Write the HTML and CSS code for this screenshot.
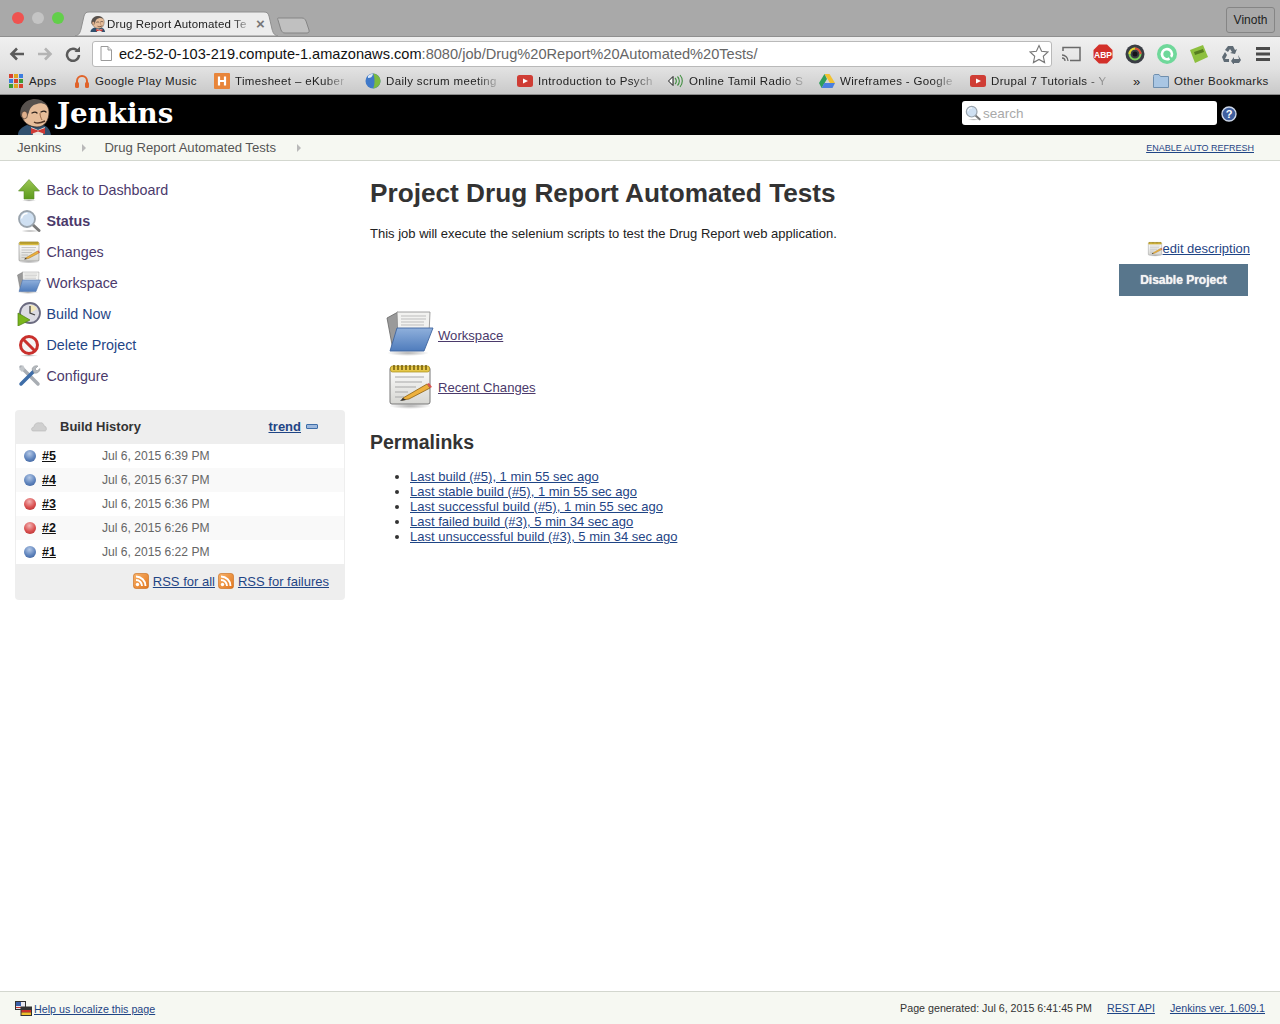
FILE: index.html
```html
<!DOCTYPE html>
<html lang="en">
<head>
<meta charset="utf-8">
<title>Drug Report Automated Tests [Jenkins]</title>
<link rel="stylesheet" href="styles.css">
</head>
<body>
<svg class="defs" width="0" height="0" aria-hidden="true">
  <defs>
    <linearGradient id="gFolder" x1="0" y1="0" x2="0" y2="1"><stop offset="0" stop-color="#8fb0dc"/><stop offset="1" stop-color="#4f7cbc"/></linearGradient>
    <linearGradient id="gPage" x1="0" y1="0" x2="0" y2="1"><stop offset="0" stop-color="#ffffff"/><stop offset="1" stop-color="#d6d6d2"/></linearGradient>
    <linearGradient id="gRss" x1="0" y1="0" x2="1" y2="1"><stop offset="0" stop-color="#f8b26a"/><stop offset="1" stop-color="#e2761d"/></linearGradient>
    <radialGradient id="gShadow"><stop offset="0" stop-color="#000" stop-opacity=".3"/><stop offset="1" stop-color="#000" stop-opacity="0"/></radialGradient>
    <linearGradient id="gArrow" x1="0" y1="0" x2="0" y2="1"><stop offset="0" stop-color="#9cc653"/><stop offset="1" stop-color="#5b9a1c"/></linearGradient>
    <symbol id="i-folder" viewBox="0 0 48 48">
      <ellipse cx="22" cy="43" rx="21" ry="3" fill="url(#gShadow)"/>
      <path d="M1 8 12 2 13 40H7Z" fill="#9a9a9a" stroke="#666" stroke-width=".8"/>
      <path d="M11 2H44L43 24 12 30Z" fill="#f2f2f0" stroke="#8a8a8a" stroke-width=".8"/>
      <path d="M15 6H40M15 9H40M15 12H38M15 15H38" stroke="#bdbdbd" stroke-width="1"/>
      <path d="M11 18H47L38 41H4Z" fill="url(#gFolder)" stroke="#3f659f" stroke-width=".9"/>
    </symbol>
    <symbol id="i-notepad" viewBox="0 0 48 48">
      <ellipse cx="24" cy="44" rx="21" ry="3" fill="url(#gShadow)"/>
      <rect x="4" y="5" width="40" height="37" rx="2" fill="url(#gPage)" stroke="#777"/>
      <rect x="4.500" y="4" width="39" height="6" rx="2" fill="#e6c84a" stroke="#a58a15" stroke-width=".7"/>
      <path d="M8 3v5M12 3v5M16 3v5M20 3v5M24 3v5M28 3v5M32 3v5M36 3v5M40 3v5" stroke="#7a6410" stroke-width="1.600"/>
      <path d="M9 15H38M9 20H36M9 25H30M9 30H22M9 35H18" stroke="#a8a8a8" stroke-width="1.200"/>
      <path d="M17 36 41 22l3 4-21 11-7 1Z" fill="#eeb13d" stroke="#8a5f12" stroke-width=".8"/>
      <path d="M41 22l2-1 3 4-2 1Z" fill="#d9534f"/>
      <path d="M17 36l-3 3 6-1Z" fill="#333"/>
    </symbol>
    <symbol id="i-up" viewBox="0 0 24 24">
      <path d="M12 1.500 22.500 13H17v8H7v-8H1.500Z" fill="url(#gArrow)" stroke="#5c8f2a" stroke-width=".6"/>
      <ellipse cx="12" cy="22.500" rx="7" ry="1.200" fill="url(#gShadow)"/>
    </symbol>
    <symbol id="i-search" viewBox="0 0 24 24">
      <ellipse cx="13" cy="22" rx="9" ry="1.500" fill="url(#gShadow)"/>
      <path d="M15 15 22 21.500" stroke="#7a7a7a" stroke-width="3" stroke-linecap="round"/>
      <circle cx="10" cy="10" r="8" fill="#cfe0f2" stroke="#9aa4ad" stroke-width="1.800"/>
      <path d="M4.500 9.500a5.500 5.500 0 0 1 6-5" fill="none" stroke="#fff" stroke-width="1.500"/>
    </symbol>
    <symbol id="i-play" viewBox="0 0 24 24">
      <circle cx="13" cy="11" r="10" fill="#dcdce4" stroke="#6b6b80" stroke-width="1.800"/>
      <path d="M13 3a8 8 0 0 1 7 4L13 11Z" fill="#f4e9b8"/>
      <path d="M13 4v7l5 2" fill="none" stroke="#444" stroke-width="1.300"/>
      <path d="M1 11 13 18 1 24Z" fill="#7ab51d" stroke="#4c7f0f" stroke-width=".7"/>
    </symbol>
    <symbol id="i-no" viewBox="0 0 24 24">
      <ellipse cx="12" cy="22.500" rx="9" ry="1.300" fill="url(#gShadow)"/>
      <circle cx="12" cy="12" r="8.500" fill="#f4f4f4" stroke="#c9302c" stroke-width="3"/>
      <path d="M6 6 18 18" stroke="#c9302c" stroke-width="3"/>
    </symbol>
    <symbol id="i-tools" viewBox="0 0 24 24">
      <path d="M4 3 21 20" stroke="#a8adb3" stroke-width="3.500" stroke-linecap="round"/>
      <path d="M2 5 6 1l2 4-3 3Z" fill="#c3c7cb"/>
      <path d="M17 7 4 20" stroke="#3f6ea8" stroke-width="3.500" stroke-linecap="round"/>
      <path d="M15 5a4.500 4.500 0 0 1 6-3l-3 3 2 2 3-2.500a4.500 4.500 0 0 1-6 4.500Z" fill="#b4b9be" stroke="#85898d" stroke-width=".5"/>
    </symbol>
    <symbol id="i-rss" viewBox="0 0 16 16">
      <rect x=".5" y=".5" width="15" height="15" rx="2.500" fill="url(#gRss)" stroke="#c76a18" stroke-width=".6"/>
      <circle cx="4.500" cy="11.500" r="1.700" fill="#fff"/>
      <path d="M3 7a6 6 0 0 1 6 6M3 3.500a9.500 9.500 0 0 1 9.500 9.500" fill="none" stroke="#fff" stroke-width="1.900"/>
    </symbol>
    <symbol id="i-jenkins" viewBox="0 0 36 36">
      <path d="M1 36c0-5 4-8 9-10l8 2 8-2c4 1 7 4 8 10Z" fill="#31506e"/>
      <path d="M14 28 21 31 28 28 26 36H16Z" fill="#e9e9e4"/>
      <path d="M14 29 21 31.500 28 29V35L21 32.500 14 35Z" fill="#cf3a35"/>
      <path d="M4 14C4 6 10 1 18 1s14 5 14 12c0 8-4 15-12 15C12 28 5 23 4 14Z" fill="#e6bd9a" stroke="#2f2622" stroke-width=".7"/>
      <path d="M4 18C1 9 8 0 18 0c5 0 9 2 12 6-5-2-8-2-10-1-5 1-7 4-8 8-1 4-4 6-8 5Z" fill="#57514d"/>
      <ellipse cx="7.500" cy="16" rx="3" ry="3.800" fill="#e0b08c" stroke="#2f2622" stroke-width=".6"/>
      <path d="M15 14c2-1 4-1 5 0M24 13c2-1 4-1 5 0" fill="none" stroke="#2b211c" stroke-width="1.300" stroke-linecap="round"/>
      <path d="M23 14c0 3 1 5 2 7" fill="none" stroke="#9a6a4a" stroke-width="1"/>
      <path d="M17 23c3 2 7 1 11-1" fill="none" stroke="#4f3224" stroke-width="1.500"/>
    </symbol>
  </defs>
</svg>

<div class="tabstrip">
  <div class="lights"><span class="light red"></span><span class="light grey"></span><span class="light green"></span></div>
  <div class="tab">
    <svg class="tab-shape" width="203" height="25" viewBox="0 0 203 25"><path d="M0 25c4-1 5-3 6-7L9 5c1-3 2-4 5-4H189c3 0 4 1 5 4l3 13c1 4 2 6 6 7Z" fill="#ececec" stroke="#8f8f8f"/></svg>
    <svg class="tab-fav" width="16" height="16"><use href="#i-jenkins"/></svg>
    <span class="tab-title">Drug Report Automated Te</span>
    <span class="tab-x">×</span>
  </div>
  <svg class="newtab" width="33" height="17" viewBox="0 0 33 17"><path d="M1 1H25c2 0 3 1 4 3l3 9c.5 2-.5 3-2 3H8c-2 0-3-1-4-3L1 3C.5 2 .500 1 1 1Z" fill="#c0c0c0" stroke="#858585"/></svg>
  <span class="user">Vinoth</span>
</div>

<div class="toolbar">
  <svg class="nav" width="16" height="16" viewBox="0 0 16 16"><path d="M15 8H3M8 2.500 2.500 8 8 13.500" fill="none" stroke="#5a5a5a" stroke-width="2.600"/></svg>
  <svg class="nav" width="16" height="16" viewBox="0 0 16 16"><path d="M1 8H13M8 2.500 13.500 8 8 13.500" fill="none" stroke="#b4b4b4" stroke-width="2.600"/></svg>
  <svg class="nav reload" width="16" height="16" viewBox="0 0 16 16"><path d="M13 5.500A6 6 0 1 0 14 9" fill="none" stroke="#5a5a5a" stroke-width="2.500"/><path d="M9.500 6H15V.5Z" fill="#5a5a5a"/></svg>
  <div class="omnibox">
    <svg width="12" height="15" viewBox="0 0 12 15"><path d="M1 .5H8L11.500 4V14.500H1Z" fill="#fff" stroke="#9a9a9a"/><path d="M8 .5V4H11.500" fill="#e8e8e8" stroke="#9a9a9a"/></svg>
    <span class="url">ec2-52-0-103-219.compute-1.amazonaws.com<span class="url-path">:8080/job/Drug%20Report%20Automated%20Tests/</span></span>
    <svg class="star" width="20" height="20" viewBox="0 0 20 20"><path d="M10 1.500 12.600 7.300 19 8 14.300 12.300 15.600 18.600 10 15.400 4.400 18.600 5.700 12.300 1 8 7.400 7.300Z" fill="#fff" stroke="#777" stroke-width="1.100"/></svg>
  </div>
  <div class="exts">
    <svg width="20" height="16" viewBox="0 0 20 16"><path d="M2 5V1.500H19V14.500H9" fill="none" stroke="#6a6a6a" stroke-width="1.500"/><path d="M1 9a6 6 0 0 1 6 6M1 12a3 3 0 0 1 3 3" fill="none" stroke="#6a6a6a" stroke-width="1.300"/></svg>
    <svg width="20" height="20" viewBox="0 0 20 20"><path d="M6 .5H14L19.500 6V14L14 19.500H6L.5 14V6Z" fill="#d3302a"/><text x="10" y="13.500" class="abp">ABP</text></svg>
    <svg width="20" height="20" viewBox="0 0 20 20"><circle cx="10" cy="10" r="9.500" fill="#3a3d44"/><circle cx="10" cy="10" r="5.500" fill="none" stroke="#7cd05a" stroke-width="2"/><path d="M10 4.500a5.500 5.500 0 0 1 5.500 5.500" fill="none" stroke="#e0483c" stroke-width="2"/><path d="M4.500 10a5.500 5.500 0 0 1 5.500-5.500" fill="none" stroke="#e8d22f" stroke-width="2"/><circle cx="10" cy="10" r="2.500" fill="#14151a"/></svg>
    <svg width="20" height="20" viewBox="0 0 20 20"><circle cx="10" cy="10" r="10" fill="#6fd89a"/><path d="M12.500 14.500A5 5 0 1 1 15 10c0 1-.3 2-1 2.800" fill="none" stroke="#fff" stroke-width="2.600"/></svg>
    <svg width="20" height="20" viewBox="0 0 20 20"><path d="M1 6 14 1l5 12-13 6Z" fill="#8dbf3e"/><path d="M5 8l9-3 1 3-9 3Z" fill="#567d20"/></svg>
    <svg width="20" height="20" viewBox="0 0 20 20"><path d="M7 2h5l2 4 2-1-2 5-5-1 2-1-2-3-2 3-3-2ZM1 13l3-5 2 3-2 4h4v3H3ZM17 11l3 5-2 3h-5v2l-3-4 3-4v2h5Z" fill="#5f6b75"/></svg>
    <svg width="20" height="16" viewBox="0 0 20 16"><path d="M3 2.500H17M3 8H17M3 13.500H17" stroke="#4a4a4a" stroke-width="3"/></svg>
  </div>
</div>

<div class="bookmarks">
  <div class="bm bm-apps">
    <svg width="14" height="14" viewBox="0 0 14 14"><g><rect width="4" height="4" fill="#d8412f"/><rect x="5" width="4" height="4" fill="#e0a520"/><rect x="10" width="4" height="4" fill="#3b7de0"/><rect y="5" width="4" height="4" fill="#3b7de0"/><rect x="5" y="5" width="4" height="4" fill="#d8412f"/><rect x="10" y="5" width="4" height="4" fill="#3f9c35"/><rect y="10" width="4" height="4" fill="#3f9c35"/><rect x="5" y="10" width="4" height="4" fill="#e0a520"/><rect x="10" y="10" width="4" height="4" fill="#d8412f"/></g></svg>
    <span>Apps</span>
  </div>
  <div class="bm bm-music">
    <svg width="14" height="14" viewBox="0 0 14 14"><path d="M2 9V7a5 5 0 0 1 10 0v2" fill="none" stroke="#e0632a" stroke-width="2"/><rect x="0" y="8" width="4" height="6" rx="1.500" fill="#e0632a"/><rect x="10" y="8" width="4" height="6" rx="1.500" fill="#e0632a"/></svg>
    <span>Google Play Music</span>
  </div>
  <div class="bm">
    <svg width="16" height="16" viewBox="0 0 16 16"><rect width="16" height="16" rx="1" fill="#e8853a"/><path d="M5 3.500V12.500M11 3.500V12.500M5 8H11" stroke="#fff" stroke-width="2.200"/></svg>
    <span class="fade">Timesheet – eKuber</span>
  </div>
  <div class="bm bm-daily">
    <svg width="16" height="16" viewBox="0 0 16 16"><circle cx="8" cy="8" r="7.500" fill="#3f79c9"/><path d="M8 .5C12 1 15.500 4 15.500 8S12 15 8 15.500C10 12 10 4 8 .5Z" fill="#7cbb3f"/><path d="M3 3c2-2 4-2 5-2-1 3-2 4-5 4Z" fill="#dce9f7"/></svg>
    <span class="fade">Daily scrum meeting</span>
  </div>
  <div class="bm">
    <svg width="16" height="12" viewBox="0 0 16 12"><rect width="16" height="12" rx="2.500" fill="#cf3d35"/><path d="M6 3.500 11 6 6 8.500Z" fill="#fff"/></svg>
    <span class="fade">Introduction to Psych</span>
  </div>
  <div class="bm">
    <svg width="16" height="14" viewBox="0 0 16 14"><path d="M.5 7 5 2.500V11.500Z" fill="#fff" stroke="#111"/><path d="M7 4a4 4 0 0 1 0 6M9.500 2.500a6.500 6.500 0 0 1 0 9M12 1a9 9 0 0 1 0 12" fill="none" stroke="#3e8e3e" stroke-width="1.100"/></svg>
    <span class="fade">Online Tamil Radio S</span>
  </div>
  <div class="bm">
    <svg width="16" height="14" viewBox="0 0 16 14"><path d="M5.500 0H10.500L16 9H11Z" fill="#f2c230"/><path d="M5.500 0 0 9 2.600 14 8 5Z" fill="#2f9e5c"/><path d="M2.600 14H13.500L16 9H5.300Z" fill="#4a7fe0"/></svg>
    <span class="fade">Wireframes - Google</span>
  </div>
  <div class="bm bm-drupal">
    <svg width="16" height="12" viewBox="0 0 16 12"><rect width="16" height="12" rx="2.500" fill="#cf3d35"/><path d="M6 3.500 11 6 6 8.500Z" fill="#fff"/></svg>
    <span class="fade">Drupal 7 Tutorials - Y</span>
  </div>
  <span class="more">»</span>
  <div class="bm bm-other">
    <svg width="16" height="14" viewBox="0 0 16 14"><path d="M.5 2.500C.5 1 1 .5 2 .5H6L7.500 2.500H15.500V13.500H.5Z" fill="#a9c6e3" stroke="#6f8fae"/></svg>
    <span>Other Bookmarks</span>
  </div>
</div>

<header class="jk-head">
  <div class="brand">
    <svg class="brand-logo" width="36" height="36"><use href="#i-jenkins"/></svg>
    <span class="brand-name">Jenkins</span>
  </div>
  <div class="search">
    <svg width="16" height="16"><use href="#i-search"/></svg>
    <span>search</span>
  </div>
  <svg class="help" width="16" height="16" viewBox="0 0 16 16"><circle cx="8" cy="8" r="7" fill="#3f5f9e" stroke="#cfd9ea" stroke-width="1.400"/><text x="8" y="12" class="help-q">?</text></svg>
</header>

<nav class="crumbs">
  <a class="crumb">Jenkins</a><span class="tri"></span>
  <a class="crumb">Drug Report Automated Tests</a><span class="tri"></span>
  <a class="refresh">ENABLE AUTO REFRESH</a>
</nav>

<div class="page">
  <aside class="side">
    <ul class="tasks">
      <li class="task"><svg width="24" height="24"><use href="#i-up"/></svg><a class="visited">Back to Dashboard</a></li>
      <li class="task"><svg width="24" height="24"><use href="#i-search"/></svg><a class="visited strong">Status</a></li>
      <li class="task"><svg width="24" height="24"><use href="#i-notepad"/></svg><a class="visited">Changes</a></li>
      <li class="task"><svg width="24" height="24"><use href="#i-folder"/></svg><a class="visited">Workspace</a></li>
      <li class="task"><svg width="24" height="24"><use href="#i-play"/></svg><a>Build Now</a></li>
      <li class="task"><svg width="24" height="24"><use href="#i-no"/></svg><a>Delete Project</a></li>
      <li class="task"><svg width="24" height="24"><use href="#i-tools"/></svg><a class="visited">Configure</a></li>
    </ul>
    <section class="history">
      <div class="hist-head">
        <svg width="16" height="12" viewBox="0 0 16 12"><path d="M2 11C0 11 0 7 3 7c0-3 3-5 6-4 2-1 4 1 4 3 3 0 3 5 1 5Z" fill="#cfcfcf" stroke="#b5b5b5" stroke-width=".6"/></svg>
        <span class="hist-title">Build History</span>
        <a class="trend">trend</a>
        <span class="trend-bar"></span>
      </div>
      <div class="hist-row"><span class="ball blue"></span><a class="num">#5</a><span class="date">Jul 6, 2015 6:39 PM</span></div>
      <div class="hist-row"><span class="ball blue"></span><a class="num">#4</a><span class="date">Jul 6, 2015 6:37 PM</span></div>
      <div class="hist-row"><span class="ball redb"></span><a class="num">#3</a><span class="date">Jul 6, 2015 6:36 PM</span></div>
      <div class="hist-row"><span class="ball redb"></span><a class="num">#2</a><span class="date">Jul 6, 2015 6:26 PM</span></div>
      <div class="hist-row"><span class="ball blue"></span><a class="num">#1</a><span class="date">Jul 6, 2015 6:22 PM</span></div>
      <div class="hist-foot">
        <svg width="16" height="16"><use href="#i-rss"/></svg><a>RSS for all</a>
        <svg width="16" height="16"><use href="#i-rss"/></svg><a>RSS for failures</a>
      </div>
    </section>
  </aside>

  <main class="content">
    <h1>Project Drug Report Automated Tests</h1>
    <p class="desc">This job will execute the selenium scripts to test the Drug Report web application.</p>
    <div class="edit"><svg width="16" height="16"><use href="#i-notepad"/></svg><a>edit description</a></div>
    <div class="actions"><span class="btn">Disable Project</span></div>
    <div class="big-links">
      <div class="big"><svg width="48" height="48"><use href="#i-folder"/></svg><a class="visited">Workspace</a></div>
      <div class="big"><svg width="48" height="48"><use href="#i-notepad"/></svg><a class="visited">Recent Changes</a></div>
    </div>
    <h2>Permalinks</h2>
    <ul class="perma">
      <li><a>Last build (#5), 1 min 55 sec ago</a></li>
      <li><a>Last stable build (#5), 1 min 55 sec ago</a></li>
      <li><a>Last successful build (#5), 1 min 55 sec ago</a></li>
      <li><a>Last failed build (#3), 5 min 34 sec ago</a></li>
      <li><a>Last unsuccessful build (#3), 5 min 34 sec ago</a></li>
    </ul>
  </main>
</div>

<footer class="foot">
  <svg width="17" height="15" viewBox="0 0 17 15"><rect x=".5" y=".5" width="10" height="8" fill="#e8e8f0" stroke="#333"/><rect x="1" y="1" width="5" height="4" fill="#3a5fa8"/><path d="M1 6.500H10" stroke="#c9302c"/><rect x="6" y="6" width="10.500" height="8.500" fill="#333" stroke="#333"/><rect x="6.500" y="9" width="9.500" height="2.500" fill="#c9302c"/><rect x="6.500" y="11.500" width="9.500" height="2.500" fill="#eebf2c"/></svg>
  <a class="loc">Help us localize this page</a>
  <span class="gen">Page generated: Jul 6, 2015 6:41:45 PM</span>
  <a class="api">REST API</a>
  <a class="ver">Jenkins ver. 1.609.1</a>
</footer>
</body>
</html>
```

FILE: styles.css
```css
* { box-sizing: border-box; }
html, body { margin: 0; padding: 0; }
body {
  display: flex;
  flex-direction: column;
  min-height: 1024px;
  font-family: "Liberation Sans", Arial, sans-serif;
  color: #333;
  background: #fff;
  overflow: hidden;
}
a { color: #1f4585; text-decoration: underline; }
a.visited { color: #4b3a6b; }
svg { display: block; flex: none; }
.defs { position: absolute; }

/* browser chrome */
.tabstrip {
  height: 36px;
  background: #a9a9a9;
  display: flex;
  align-items: flex-end;
  padding-left: 12px;
}
.lights { display: flex; gap: 8px; align-self: flex-start; margin-top: 12px; }
.light { width: 12px; height: 12px; border-radius: 50%; }
.light.red { background: #ef5350; }
.light.grey { background: #c4c4c4; }
.light.green { background: #62cf4a; }
.tab {
  position: relative;
  width: 200px;
  height: 24px;
  margin-left: 14px;
  display: flex;
  align-items: center;
  padding: 0 0 0 12px;
}
.tab-shape { position: absolute; left: -3px; top: -1px; }
.tab-fav { position: relative; }
.tab-title {
  position: relative;
  margin-left: 1px;
  width: 143px;
  font-size: 11.5px;
  letter-spacing: .15px;
  color: #222;
  white-space: nowrap;
  -webkit-mask-image: linear-gradient(to right, #000 88%, rgba(0,0,0,.15));
  mask-image: linear-gradient(to right, #000 88%, rgba(0,0,0,.15));
}
.tab-x { position: relative; margin-left: 6px; font-size: 15px; font-weight: bold; color: #777; line-height: 16px; }
.newtab { position: relative; margin: 0 0 2px -1px; }
.user {
  margin: 0 5px 3px auto;
  width: 49px;
  height: 26px;
  border: 1px solid #858585;
  border-radius: 3px;
  font-size: 12px;
  line-height: 24px;
  text-align: center;
  color: #222;
}

.toolbar {
  height: 32px;
  border-top: 1px solid #8f8f8f;
  background: linear-gradient(#f0f0f0, #e2e2e2);
  display: flex;
  align-items: center;
  padding: 2px 0 0 9px;
}
.nav { margin-right: 12px; }
.nav.reload { margin-right: 11px; }
.omnibox {
  width: 960px;
  height: 26px;
  background: #fff;
  border: 1px solid #b9b9b9;
  border-radius: 3px;
  display: flex;
  align-items: center;
  padding: 0 2px 0 7px;
}
.url { margin-left: 7px; font-size: 14.6px; color: #111; white-space: nowrap; flex: 1; }
.url-path { color: #666; }
.exts { display: flex; align-items: center; gap: 12px; margin-left: 9px; }
.abp { font: bold 8.500px "Liberation Sans", sans-serif; fill: #fff; text-anchor: middle; }

.bookmarks {
  height: 27px;
  background: linear-gradient(#e2e2e2, #c9c9c9);
  border-bottom: 1px solid #8a8a8a;
  display: flex;
  align-items: center;
  padding-left: 9px;
  font-size: 11.5px;
  letter-spacing: .35px;
  color: #222;
}
.bm { display: flex; align-items: center; gap: 5px; width: 151px; white-space: nowrap; }
.bm-apps { width: 66px; gap: 6px; }
.bm-music { width: 139px; gap: 6px; }
.bm-daily { width: 152px; }
.bm-drupal { width: 163px; }
.bm-other { width: auto; }
.fade {
  width: max-content;
  -webkit-mask-image: linear-gradient(to right, #000 82%, rgba(0,0,0,.2));
  mask-image: linear-gradient(to right, #000 82%, rgba(0,0,0,.2));
}
.more { width: 20px; font-size: 13px; }

/* Jenkins header */
.jk-head {
  height: 40px;
  background: #000;
  display: flex;
  align-items: center;
  padding-left: 17px;
}
.brand { display: flex; align-items: flex-end; height: 100%; }
.brand-name {
  align-self: center;
  margin: 0 0 3px 4px;
  font: bold 27.7px/34px "DejaVu Serif", serif;
  color: #fff;
}
.search {
  margin: 0 0 4px auto;
  width: 255px;
  height: 24px;
  background: #fff;
  border-radius: 3px;
  display: flex;
  align-items: center;
  padding-left: 3px;
  gap: 2px;
  font-size: 13.5px;
  color: #a9a9a9;
}
.help { margin: 0 43px 2px 4px; }
.help-q { font: bold 11px "Liberation Sans", sans-serif; fill: #fff; text-anchor: middle; }

.crumbs {
  height: 26px;
  background: #f6f8f2;
  border-bottom: 1px solid #d3d7cf;
  display: flex;
  align-items: center;
  padding: 0 26px 0 17px;
  font-size: 13.1px;
}
.crumb { color: #555; text-decoration: none; }
.tri {
  width: 0; height: 0;
  margin: 0 18px 0 21px;
  border-left: 4px solid #b9b9b9;
  border-top: 4px solid transparent;
  border-bottom: 4px solid transparent;
}
.refresh { margin-left: auto; font-size: 9px; }

/* main */
.page { flex: 1; display: flex; }
.side { width: 345px; padding: 13px 0 0 15px; }
.tasks { list-style: none; margin: 0; padding: 0; }
.task { height: 31px; display: flex; align-items: center; gap: 5.500px; padding-left: 2px; font-size: 14.3px; }
.task a { text-decoration: none; }
.task a.strong { font-weight: bold; }

.history {
  margin-top: 19px;
  width: 330px;
  background: #eeeeee;
  border-radius: 4px;
  font-size: 12.1px;
}
.hist-head { height: 34px; display: flex; align-items: center; padding: 0 0 2px 16px; }
.hist-title { margin-left: 13px; font-size: 13px; font-weight: bold; color: #333; }
.trend { margin-left: auto; font-size: 13px; font-weight: bold; }
.trend-bar {
  margin: 1px 27px 0 5px;
  width: 12px; height: 5px;
  background: #9db8dd;
  border: 1px solid #3f6ea8;
  border-radius: 1px;
}
.hist-row {
  height: 24px;
  margin: 0 1px;
  background: #fff;
  display: flex;
  align-items: center;
  padding-left: 8px;
}
.hist-row:nth-child(odd) { background: #f9f9f9; }
.ball { width: 12px; height: 12px; border-radius: 50%; }
.ball.blue { background: radial-gradient(circle at 45% 30%, #b4c8e6, #5f84bd 55%, #335692); }
.ball.redb { background: radial-gradient(circle at 45% 30%, #f3b5b5, #d94f4f 55%, #a82626); }
.num { margin-left: 6px; width: 60px; font-size: 12.5px; font-weight: bold; color: #111; }
.date { color: #666; }
.hist-foot {
  height: 36px;
  display: flex;
  align-items: center;
  justify-content: flex-end;
  gap: 3.500px;
  padding: 0 16px 2px 0;
  font-size: 13px;
}

.content { flex: 1; padding: 16px 30px 0 25px; }
h1 { margin: 0; font-size: 26.2px; line-height: 32px; font-weight: bold; color: #333; }
.desc { margin: 17px 0 0; font-size: 13px; line-height: 16px; color: #222; }
.edit {
  margin-top: -2px;
  display: flex;
  justify-content: flex-end;
  align-items: flex-end;
  font-size: 13px;
  line-height: 17px;
}
.actions { margin-top: 7px; display: flex; justify-content: flex-end; padding-right: 2px; }
.btn {
  width: 129px;
  height: 32px;
  background: #58768c;
  color: #f4f4f4;
  font-size: 12px;
  font-weight: bold;
  line-height: 32px;
  text-align: center;
  text-shadow: 0 0 1px #f4f4f4;
}
.big-links { margin: 14px 0 0 16px; display: flex; flex-direction: column; gap: 4px; }
.big { display: flex; align-items: center; height: 48px; gap: 4px; font-size: 13.1px; }
.big a { margin-top: 2px; }
h2 { margin: 20px 0 0; font-size: 19.5px; line-height: 24px; font-weight: bold; color: #333; }
.perma { margin: 15px 0 0; padding-left: 40px; font-size: 13px; line-height: 15px; }

.foot {
  height: 33px;
  background: #f6f8f2;
  border-top: 1px solid #d3d7cf;
  display: flex;
  align-items: center;
  padding: 0 15px 0 15px;
  font-size: 10.7px;
}
.loc { margin: 2px 0 0 2px; }
.gen { margin-left: auto; color: #333; }
.api { margin-left: 15px; }
.ver { margin-left: 15px; }
```
